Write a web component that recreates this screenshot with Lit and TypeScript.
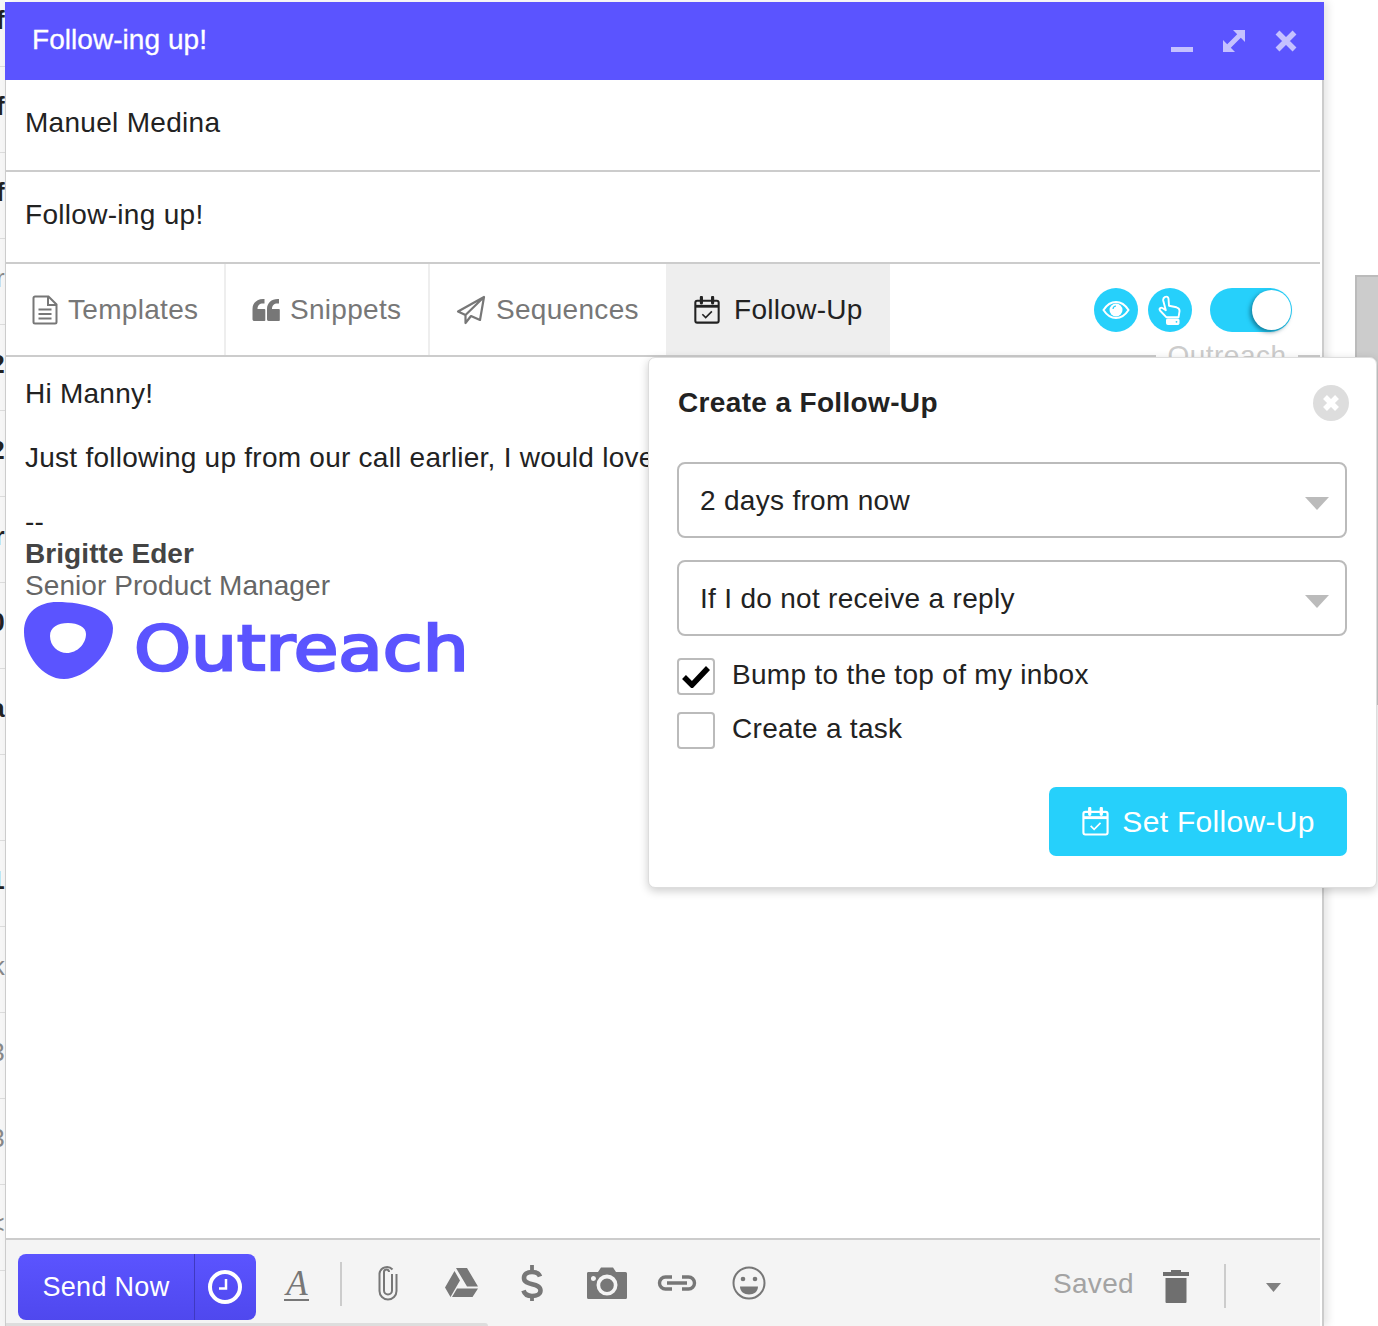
import { LitElement, html, css } from "lit";
import { customElement } from "lit/decorators.js";

const calendar = (c: string, s: number) => html`<svg class="ic" width=${s} height=${s} viewBox="0 0 28 30" fill="none" stroke=${c} stroke-width="2.200">
  <rect x="1.500" y="5" width="25" height="23.500" rx="2"/>
  <path d="M1.500 11h25" stroke-width="3"/>
  <path d="M8 1.500v6M20 1.500v6" stroke-width="3.400" stroke-linecap="round"/>
  <path d="M9 19.500l3.600 3.600 6.600-6.600" stroke-width="1.700"/>
</svg>`;

const caret = html`<svg class="sel-caret" width="24" height="13" viewBox="0 0 24 13"><path d="M0 0h24L12 13z" fill="#bbb"/></svg>`;

const leftGlyphs: [string, boolean][] = [
  ["f", false], ["f", false], ["f", false], ["r", true], ["2", false], ["2", false], ["r", false], ["0", false],
  ["a", false], ["", false], ["1", false], ["k", true], ["3", true], ["3", true], ["<", true], ["", false],
];

@customElement("app-root")
export class AppRoot extends LitElement {
  static styles = css`
    :host { display: block; width: 1378px; height: 1326px; position: relative; overflow: hidden; background: #fff;
      font-family: "Liberation Sans", Arial, sans-serif; color: #222; font-size: 28px; letter-spacing: .3px; }
    .ic { flex: none; display: block; }
    .strip { position: absolute; left: 0; top: -19px; width: 5px; display: flex; flex-direction: column; background: #f6f6f6; overflow: hidden; }
    .strip div { height: 86px; flex: none; border-bottom: 1px solid #dcdcdc; display: flex; align-items: center; justify-content: flex-end; font-size: 26px; font-weight: 700; color: #222; line-height: 1; padding-bottom: 8px; box-sizing: border-box; }
    .strip div.dim { color: #888; font-weight: 400; }
    .scroll { position: absolute; left: 1355px; top: 275px; width: 23px; height: 430px; background: #ccc; border-left: 2px solid #bbb; border-top: 2px solid #bbb; box-sizing: border-box; }
    .win { position: absolute; left: 5px; top: 2px; width: 1319px; height: 1324px; display: flex; flex-direction: column; background: #fff; box-shadow: 4px 0 8px rgba(0,0,0,.1); }
    .head { height: 78px; flex: none; background: #5b54ff; color: #fff; display: flex; align-items: center; padding: 0 25px 0 27px; font-size: 28px; letter-spacing: .05px; -webkit-text-stroke: .3px #fff; }
    .head .t { flex: 1; padding-bottom: 2px; }
    .wctl { display: flex; align-items: center; gap: 28px; margin-left: -1px; margin-right: 1px; }
    .panel { flex: 1; display: flex; flex-direction: column; border-left: 1px solid #ccc; border-right: 2px solid #ccc; min-height: 0; }
    .row { height: 92px; flex: none; box-sizing: border-box; display: flex; align-items: center; padding: 0 0 4px 19px; border-bottom: 2px solid #ccc; margin-right: 2px; }
    .tabs { height: 93px; flex: none; box-sizing: border-box; display: flex; align-items: stretch; border-bottom: 2px solid #ccc; margin-right: 2px; color: #777; position: relative; }
    .tab { display: flex; align-items: center; gap: 10px; box-sizing: border-box; border-right: 2px solid #eee; padding-left: 26px; }
    .tab.a { width: 220px; }
    .tab.b { width: 204px; }
    .tab.c { width: 236px; border-right: none; }
    .tab.d { width: 224px; background: #eee; color: #222; border-right: none; padding-left: 27px; gap: 13px; }
    .tools { margin-left: auto; display: flex; align-items: center; gap: 10px; padding-right: 28px; }
    .circ { width: 44px; height: 44px; border-radius: 50%; background: #26d0fb; display: flex; align-items: center; justify-content: center; }
    .toggle { width: 82px; height: 44px; border-radius: 22px; background: #26d0fb; position: relative; margin-left: 8px; }
    .knob { position: absolute; right: 1px; top: 2px; width: 39px; height: 40px; border-radius: 50%; background: #fff; box-shadow: -2px 2px 4px rgba(0,60,80,.55); }
    .ghost { position: absolute; right: 22px; top: 74px; width: 142px; text-align: center; height: 20px; background: #fff; color: #ccc; font-size: 28px; line-height: 36px; overflow: hidden; letter-spacing: .5px; }
    .body { flex: 1; padding: 21px 0 0 19px; line-height: 32px; font-size: 28px; white-space: nowrap; overflow: hidden; min-height: 0; letter-spacing: .25px; }
    .body p { margin: 0; }
    .gap { height: 32px; }
    .name { font-weight: 700; color: #444; letter-spacing: .07px; }
    .role { color: #666; letter-spacing: .07px; }
    .logo { display: flex; align-items: center; gap: 21px; height: 78px; color: #5b54ff; margin-left: -1px; }
    .word { display: inline-block; font-family: "DejaVu Sans", sans-serif; font-weight: 400; font-size: 62px; line-height: 78px; letter-spacing: 0; -webkit-text-stroke: 2.500px #5b54ff; transform: scaleX(1.17); transform-origin: left center; margin-top: 15px; }
    .foot { height: 88px; flex: none; background: #f4f4f4; border-top: 2px solid #ccc; box-sizing: border-box; margin-right: 2px; position: relative; display: flex; align-items: flex-start; padding: 14px 0 0 12px; }
    .send { width: 238px; height: 66px; border-radius: 8px; flex: none; background: linear-gradient(#5b54ff, #4f48ee); color: #fff; display: flex; align-items: stretch; font-size: 27px; }
    .send .l { width: 177px; border-right: 1px solid #3f39c0; display: flex; align-items: center; justify-content: center; box-sizing: border-box; }
    .send .r { flex: 1; display: flex; align-items: center; justify-content: center; padding-right: 2px; }
    .fi { position: absolute; top: 0; bottom: 0; display: flex; align-items: center; justify-content: center; }
    .fi.i1 { left: 271px; width: 40px; padding-top: 4px; }
    .fi.i2 { left: 368px; width: 28px; }
    .fi.i3 { left: 437px; width: 36px; }
    .fi.i4 { left: 514px; width: 24px; }
    .fi.i5 { left: 580px; width: 42px; }
    .fi.i6 { left: 650px; width: 42px; }
    .fi.i7 { left: 725px; width: 36px; }
    .fi.i8 { left: 1156px; width: 28px; padding-top: 6px; }
    .fi.i9 { left: 1259px; width: 16px; padding-top: 8px; }
    .sep { position: absolute; width: 2px; height: 44px; background: #ccc; top: 22px; }
    .sep.s1 { left: 334px; }
    .sep.s2 { left: 1218px; top: 24px; }
    .saved { position: absolute; left: 1047px; top: 26px; color: #a3a3a3; font-size: 28px; line-height: 36px; }
    .pop { position: absolute; left: 648px; top: 357px; width: 729px; height: 531px; box-sizing: border-box; background: #fff; border: 1px solid #ddd; border-radius: 7px; box-shadow: 0 3px 10px rgba(0,0,0,.2); padding: 27px 29px 31px 28px; display: flex; flex-direction: column; }
    .pop-h { display: flex; align-items: center; justify-content: space-between; height: 36px; font-weight: 700; font-size: 28px; margin-right: -2px; margin-bottom: 41px; letter-spacing: .35px; padding-left: 1px; }
    .x { width: 36px; height: 36px; border-radius: 50%; background: #ddd; display: flex; align-items: center; justify-content: center; }
    .sel { height: 76px; box-sizing: border-box; border: 2px solid #bbb; border-radius: 8px; margin-bottom: 22px; display: flex; align-items: center; justify-content: space-between; padding: 2px 16px 0 21px; }
    .sel-caret { margin-top: 4px; }
    .chk { display: flex; align-items: center; gap: 17px; height: 36px; margin-bottom: 18px; }
    .chk span { padding-bottom: 2px; }
    .box { width: 38px; height: 37px; box-sizing: border-box; border: 2px solid #bbb; border-radius: 4px; display: flex; align-items: center; justify-content: center; flex: none; }
    .btn-row { margin-top: auto; display: flex; justify-content: flex-end; }
    .btn { width: 298px; height: 69px; border-radius: 7px; background: #26d0fb; color: #fff; display: flex; align-items: center; justify-content: center; gap: 12px; font-size: 30px; letter-spacing: .3px; }
    .curve { position: absolute; left: 6px; top: 1323px; width: 482px; height: 3px; background: #ddd; border-top-right-radius: 6px; }
  `;

  render() {
    return html`
      <div class="strip">${leftGlyphs.map(([g, dim]) => html`<div class=${dim ? "dim" : ""}>${g}</div>`)}</div>
      <div class="scroll"></div>
      <div class="win">
        <div class="head">
          <div class="t">Follow-ing up!</div>
          <div class="wctl">
            <svg class="ic" width="24" height="24" viewBox="0 0 24 24"><rect x="1" y="18" width="22" height="5" fill="#c5c1ff"/></svg>
            <svg class="ic" width="24" height="24" viewBox="0 0 24 24" fill="#c5c1ff"><path d="M1 23V11l4.200 4.200 10-10L11 1h12v12l-4.200-4.200-10 10L13 23z"/></svg>
            <svg class="ic" width="24" height="24" viewBox="0 0 24 24"><path d="M3.500 3.500l17 17M20.500 3.500l-17 17" stroke="#c5c1ff" stroke-width="5.500" fill="none"/></svg>
          </div>
        </div>
        <div class="panel">
          <div class="row">Manuel Medina</div>
          <div class="row">Follow-ing up!</div>
          <div class="tabs">
            <div class="tab a">
              <svg class="ic" width="26" height="30" viewBox="0 0 26 30" fill="none" stroke="#777" stroke-width="2"><path d="M1.500 3a1.500 1.500 0 0 1 1.500-1.500h13.500L24.500 9.500V27a1.500 1.500 0 0 1-1.500 1.500H3A1.500 1.500 0 0 1 1.500 27z"/><path d="M16 1.500V10h8.500M6.500 14.500h13M6.500 19h13M6.500 23.500h13"/></svg>
              <span>Templates</span>
            </div>
            <div class="tab b">
              <svg class="ic" width="28" height="24" viewBox="0 0 28 24" fill="#777"><path d="M12.500 11H5.500c0-3.500 2-5.500 5.500-5.500h1.500V1H11C5 1 .5 5 .5 11v10.500A1.800 1.800 0 0 0 2.300 23h10.200a.8.8 0 0 0 .8-.8V12a1 1 0 0 0-.8-1zM27 11h-7c0-3.500 2-5.500 5.500-5.500H27V1h-1.500C19.500 1 15 5 15 11v10.500a1.800 1.800 0 0 0 1.800 1.500H27a.8.8 0 0 0 .8-.8V12A1 1 0 0 0 27 11z"/></svg>
              <span>Snippets</span>
            </div>
            <div class="tab c">
              <svg class="ic" width="30" height="30" viewBox="0 0 30 30" fill="none" stroke="#777" stroke-width="2.200" stroke-linejoin="round"><path d="M28 2L2 16.500l7.500 3.500L28 2zM28 2L24 25l-9-4-5.500 7v-8"/></svg>
              <span>Sequences</span>
            </div>
            <div class="tab d">${calendar("#222", 28)}<span>Follow-Up</span></div>
            <div class="tools">
              <div class="circ">
                <svg class="ic" width="28" height="20" viewBox="0 0 28 20" fill="none" stroke="#fff" stroke-width="2"><path d="M1.500 10C5 4.500 9 2 14 2s9 2.500 12.500 8C23 15.500 19 18 14 18S5 15.500 1.500 10z"/><circle cx="14" cy="10" r="6.500" fill="#fff" stroke="none"/><path d="M11 9a3.200 3.200 0 0 1 3-3" stroke="#26d0fb" stroke-width="1.200"/></svg>
              </div>
              <div class="circ">
                <svg class="ic" width="24" height="32" viewBox="0 0 24 32" fill="none" stroke="#fff" stroke-width="1.900" stroke-linejoin="round"><path d="M7 3a2.300 2.300 0 0 1 3.500 1.800l.5 7 7.500 1.500c2 .5 3.200 1.800 3 4l-1 6H8.500L2 16.500c-1.200-1.700.6-3.500 2.400-2.500l3.400 2.300L5.200 6.500C5 5 5.800 3.500 7 3z"/><rect x="8.500" y="25" width="12.500" height="5.500" rx="1" fill="#fff" stroke-width="1"/><circle cx="18.500" cy="27.800" r=".9" fill="#26d0fb" stroke="none"/></svg>
              </div>
              <div class="toggle"><div class="knob"></div></div>
            </div>
            <div class="ghost">Outreach</div>
          </div>
          <div class="body">
            <p>Hi Manny!</p>
            <div class="gap" aria-hidden="true"></div>
            <p>Just following up from our call earlier, I would love</p>
            <div class="gap" aria-hidden="true"></div>
            <p>--</p>
            <p class="name">Brigitte Eder</p>
            <p class="role">Senior Product Manager</p>
            <div class="logo">
              <svg class="ic" width="89" height="78" viewBox="0 0 89 78" fill="#5b54ff" fill-rule="evenodd"><path d="M0 30C0 10 15 0 33 0c27 0 56 8 56 26C89 50 62 77 40 77 18 77 0 52 0 30zM26 34c0 10 8 17 17 17 10 0 19-9 19-19 0-7-8-11-18-11S26 25 26 34z"/></svg>
              <span class="word">Outreach</span>
            </div>
          </div>
          <div class="foot">
            <div class="send">
              <div class="l">Send Now</div>
              <div class="r">
                <svg class="ic" width="36" height="36" viewBox="0 0 36 36" fill="none" stroke="#fff"><circle cx="18" cy="18" r="15" stroke-width="4"/><path d="M19 10v9.500h-7" stroke-width="2.500"/></svg>
              </div>
            </div>
            <div class="fi i1">
              <svg class="ic" width="28" height="34" viewBox="0 0 28 34"><text x="14" y="27" text-anchor="middle" font-family="Liberation Serif" font-style="italic" font-size="35" fill="#777">A</text><rect x="1" y="31" width="25" height="2" fill="#777"/></svg>
            </div>
            <div class="sep s1"></div>
            <div class="fi i2">
              <svg class="ic" width="20" height="36" viewBox="0 0 20 36" fill="none" stroke="#777" stroke-width="2"><path d="M14 9v16.500a4 4 0 0 1-8 0V7a2.500 2.500 0 0 1 5 0M18.500 9v17a8.500 8.500 0 0 1-17 0V8.500a7.500 7.500 0 0 1 13-4"/></svg>
            </div>
            <div class="fi i3">
              <svg class="ic" width="33" height="30" viewBox="0 0 33 30" fill="#777"><path d="M11 0h11l11 18.500H22zM9.500 3L15 12.500 5.500 29 0 19.500zM12 20.500h21L27.500 29H7z"/></svg>
            </div>
            <div class="fi i4">
              <svg class="ic" width="22" height="36" viewBox="0 0 22 36" fill="none" stroke="#777" stroke-width="4.600"><path d="M19 11.500C18 8.500 15 7 11 7 6 7 3 9.500 3 13c0 8.500 16.500 4 16.500 12.500 0 3.500-3.500 5.500-8.500 5.500-4.500 0-7.500-2-8.500-5.500"/><path d="M11 0v6M11 30v6" stroke-width="3.800"/></svg>
            </div>
            <div class="fi i5">
              <svg class="ic" width="40" height="32" viewBox="0 0 40 32" fill="#777" fill-rule="evenodd"><path d="M1 5h10l3-4.500h12L29 5h9.500A1.500 1.500 0 0 1 40 6.500v24a1.500 1.500 0 0 1-1.500 1.500h-37A1.500 1.500 0 0 1 0 30.500v-24A1.500 1.500 0 0 1 1 5zM20 7.500a10.500 10.500 0 1 0 0 21 10.500 10.500 0 0 0 0-21zM20 11.500a6.800 6.800 0 1 1 0 13.600 6.800 6.800 0 0 1 0-13.600zM6.500 9a2.500 2.500 0 1 0 0 5 2.500 2.500 0 0 0 0-5z"/></svg>
            </div>
            <div class="fi i6">
              <svg class="ic" width="40" height="16" viewBox="0 0 40 16" fill="none" stroke="#777" stroke-width="3.400"><path d="M15 2H8.500a6 6 0 0 0 0 12H15M25 2h6.500a6 6 0 0 1 0 12H25M10 8h20"/></svg>
            </div>
            <div class="fi i7">
              <svg class="ic" width="34" height="34" viewBox="0 0 34 34"><circle cx="17" cy="17" r="15.500" fill="none" stroke="#777" stroke-width="2"/><circle cx="11" cy="13" r="2.300" fill="#777"/><circle cx="23" cy="13" r="2.300" fill="#777"/><path d="M8 20.500h18c0 5-4 8-9 8s-9-3-9-8z" fill="#777"/></svg>
            </div>
            <div class="saved">Saved</div>
            <div class="fi i8">
              <svg class="ic" width="26" height="34" viewBox="0 0 26 34" fill="#6f6f6f"><path d="M0 3h8V1h10v2h8v4H0zM2.500 9h21v24a1 1 0 0 1-1 1h-19a1 1 0 0 1-1-1z"/></svg>
            </div>
            <div class="sep s2"></div>
            <div class="fi i9">
              <svg class="ic" width="15" height="9" viewBox="0 0 15 9"><path d="M0 0h15L7.500 9z" fill="#808080"/></svg>
            </div>
          </div>
        </div>
      </div>
      <div class="curve"></div>
      <div class="pop">
        <div class="pop-h">
          <span>Create a Follow-Up</span>
          <div class="x"><svg class="ic" width="20" height="20" viewBox="0 0 20 20"><path d="M4 4l12 12M16 4L4 16" stroke="#fff" stroke-width="5.500"/></svg></div>
        </div>
        <div class="sel"><span>2 days from now</span>${caret}</div>
        <div class="sel"><span>If I do not receive a reply</span>${caret}</div>
        <div class="chk">
          <div class="box"><svg class="ic" width="28" height="24" viewBox="0 0 28 24"><path d="M2 13l8 8L26 4" fill="none" stroke="#000" stroke-width="5.500"/></svg></div>
          <span>Bump to the top of my inbox</span>
        </div>
        <div class="chk">
          <div class="box"></div>
          <span>Create a task</span>
        </div>
        <div class="btn-row">
          <div class="btn">${calendar("#fff", 29)}<span>Set Follow-Up</span></div>
        </div>
      </div>
    `;
  }
}
